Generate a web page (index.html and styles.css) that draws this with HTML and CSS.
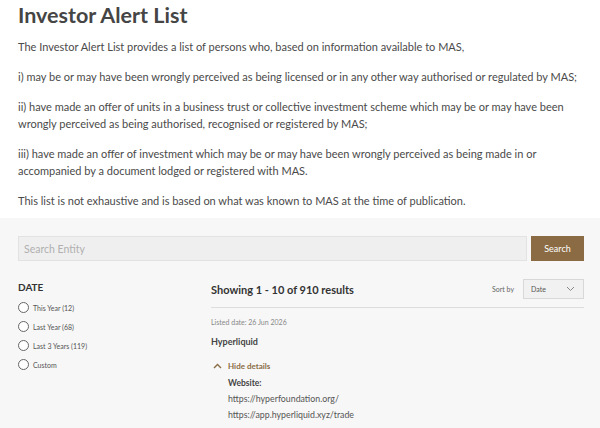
FILE: index.html
```html
<!DOCTYPE html>
<html lang="en">
<head>
<meta charset="utf-8">
<title>Investor Alert List</title>
<link rel="stylesheet" href="styles.css">
</head>
<body>
<section class="intro">
  <h1 class="title">Investor Alert List</h1>
  <p>The Investor Alert List provides a list of persons who, based on information available to MAS,</p>
  <p>i) may be or may have been wrongly perceived as being licensed or in any other way authorised or regulated by MAS;</p>
  <p>ii) have made an offer of units in a business trust or collective investment scheme which may be or may have been wrongly perceived as being authorised, recognised or registered by MAS;</p>
  <p>iii) have made an offer of investment which may be or may have been wrongly perceived as being made in or accompanied by a document lodged or registered with MAS.</p>
  <p>This list is not exhaustive and is based on what was known to MAS at the time of publication.</p>
</section>
<section class="listing">
  <div class="search-row">
    <input class="search-input" type="text" placeholder="Search Entity">
    <button class="search-btn" type="button">Search</button>
  </div>
  <div class="content">
    <aside class="filters">
      <h2 class="filter-title">DATE</h2>
      <label class="radio"><span class="circle"></span>This Year (12)</label>
      <label class="radio"><span class="circle"></span>Last Year (68)</label>
      <label class="radio"><span class="circle"></span>Last 3 Years (119)</label>
      <label class="radio"><span class="circle"></span>Custom</label>
    </aside>
    <main class="results">
      <div class="results-head">
        <h2 class="count">Showing 1 - 10 of 910 results</h2>
        <div class="sort">
          <span class="sort-label">Sort by</span>
          <div class="select">
            <span>Date</span>
            <svg width="9" height="6" viewBox="0 0 9 6"><path d="M1 1l3.5 3.5L8 1" fill="none" stroke="#888" stroke-width="1"/></svg>
          </div>
        </div>
      </div>
      <div class="item">
        <div class="date">Listed date: 26 Jun 2026</div>
        <div class="name">Hyperliquid</div>
        <div class="toggle">
          <svg width="9" height="6" viewBox="0 0 9 6"><path d="M1 5l3.5-3.5L8 5" fill="none" stroke="#8a6d44" stroke-width="1.4"/></svg>
          <span>Hide details</span>
        </div>
        <div class="details">
          <div class="label">Website:</div>
          <div class="link">https://hyperfoundation.org/</div>
          <div class="link">https://app.hyperliquid.xyz/trade</div>
        </div>
      </div>
    </main>
  </div>
</section>
</body>
</html>
```

FILE: styles.css
```css
html, body {
  margin: 0;
  padding: 0;
  background: #f7f7f7;
  font-family: "Lato", "Liberation Sans", sans-serif;
  color: #444;
}
.intro {
  background: #fff;
  padding: 0 18px 9px;
}
.title {
  margin: 0;
  font-size: 21.5px;
  line-height: 30px;
  font-weight: 700;
  color: #454545;
}
.intro p {
  margin: 0 0 13px;
  font-size: 11px;
  line-height: 17px;
  color: #4a4a4a;
}
.intro p:first-of-type {
  margin-top: 8px;
}
.intro p:last-child {
  margin-bottom: 0;
}
.listing {
  padding: 18px 16px 0 18px;
}
.search-row {
  display: flex;
  gap: 4px;
  height: 25px;
}
.search-input {
  flex: 1;
  margin: 0;
  border: 1px solid #e2e2e2;
  background: #efefef;
  padding: 0 5px;
  font-family: inherit;
  font-size: 10.5px;
  color: #444;
  outline: none;
}
.search-input::placeholder {
  color: #b0b0b0;
}
.search-btn {
  width: 53px;
  margin: 0;
  border: 0;
  background: #8a6b43;
  color: #fff;
  font-family: inherit;
  font-size: 9px;
  padding: 0;
}
.content {
  display: flex;
  margin-top: 18px;
}
.filters {
  width: 193px;
  flex: none;
}
.filter-title {
  margin: 0 0 3px;
  font-size: 10px;
  line-height: 16px;
  font-weight: 700;
  color: #333;
}
.radio {
  display: flex;
  align-items: center;
  gap: 4px;
  height: 19px;
  font-size: 7px;
  color: #555;
}
.circle {
  width: 9px;
  height: 9px;
  border: 1px solid #666;
  border-radius: 50%;
  background: #fff;
}
.results {
  flex: 1;
}
.results-head {
  display: flex;
  align-items: center;
  justify-content: space-between;
  padding-bottom: 8px;
  border-bottom: 1px solid #ddd;
}
.count {
  margin: 0;
  font-size: 11px;
  font-weight: 700;
  color: #333;
}
.sort {
  display: flex;
  align-items: center;
  gap: 9px;
}
.sort-label {
  font-size: 7px;
  color: #666;
}
.select {
  width: 61px;
  height: 20px;
  box-sizing: border-box;
  border: 1px solid #d8d8d8;
  background: #f1f1f1;
  display: flex;
  align-items: center;
  justify-content: space-between;
  padding: 0 8px 0 7px;
  font-size: 7px;
  color: #555;
}
.item {
  padding-top: 9px;
}
.date {
  font-size: 7px;
  color: #888;
  line-height: 10px;
}
.name {
  margin-top: 9px;
  font-size: 9px;
  font-weight: 700;
  color: #444;
  line-height: 12px;
}
.toggle {
  margin-top: 13px;
  display: flex;
  align-items: center;
  gap: 6px;
  padding-left: 2px;
  font-size: 8px;
  font-weight: 700;
  color: #8a6d44;
  line-height: 10px;
}
.details {
  padding-left: 17px;
  margin-top: 4px;
}
.label {
  font-size: 8.5px;
  font-weight: 700;
  color: #444;
  line-height: 16px;
}
.link {
  font-size: 8.8px;
  color: #555;
  line-height: 15.5px;
}
```
